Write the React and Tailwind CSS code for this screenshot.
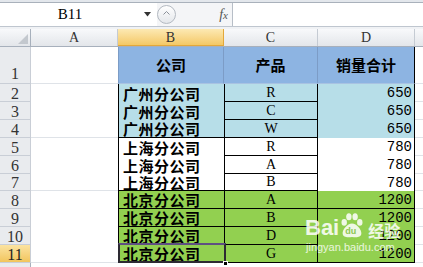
import React from 'react';

const rows = [
  { n: 2, co: '广州分公司', p: 'R', v: 650, kind: 'teal' },
  { n: 3, co: '广州分公司', p: 'C', v: 650, kind: 'teal' },
  { n: 4, co: '广州分公司', p: 'W', v: 650, kind: 'teal', bLine: true, aLine: true },
  { n: 5, co: '上海分公司', p: 'R', v: 780, kind: 'white' },
  { n: 6, co: '上海分公司', p: 'A', v: 780, kind: 'white' },
  { n: 7, co: '上海分公司', p: 'B', v: 780, kind: 'white', bLine: true, aLine: true, short: true },
  { n: 8, co: '北京分公司', p: 'A', v: 1200, kind: 'green', bLine: true, dLine: true },
  { n: 9, co: '北京分公司', p: 'B', v: 1200, kind: 'green', bLine: true },
  { n: 10, co: '北京分公司', p: 'D', v: 1200, kind: 'green', bLine: true },
  { n: 11, co: '北京分公司', p: 'G', v: 1200, kind: 'green', bLine: true, dLine: true, aLine: true, sel: true },
];

const fill = {
  teal: 'bg-[#b7dee8]',
  white: 'bg-white',
  green: 'bg-[#92d050]',
};

const cn = "font-['Noto_Sans_CJK_SC',sans-serif]";

function FormulaBar() {
  return (
    <div>
      <div className="h-[3px] bg-[#e3e7ec] border-b border-[#a9b1bb]" />
      <div className="flex h-[23px] bg-white">
        <div className="w-[157px] flex items-center">
          <div className="w-[140px] text-center font-['Liberation_Serif',serif] text-[15px] leading-none text-black">B11</div>
          <svg width="9" height="5" viewBox="0 0 9 5" className="ml-[3px]">
            <path d="M1 0 H8 L4.5 4.5 Z" fill="#333" />
          </svg>
        </div>
        <div className="w-[75px] flex items-center bg-[#f4f5f7]">
          <div className="w-[19px] h-[19px] rounded-full border border-[#b3b9c1] bg-gradient-to-b from-white to-[#e4e7eb] flex items-start justify-center">
            <svg width="7" height="4" viewBox="0 0 7 4" className="mt-[5px]">
              <path d="M0.5 3.5 L3.5 0.5 L6.5 3.5" fill="none" stroke="#8a9099" strokeWidth="1" />
            </svg>
          </div>
          <div className="ml-auto mr-[4px] font-['Liberation_Serif',serif] italic text-[14px] leading-none text-[#555]">
            f<span className="text-[11px]">x</span>
          </div>
        </div>
        <div className="flex-1 border-l border-[#b7bec7] bg-white" />
      </div>
      <div className="h-px bg-[#bfc6cf]" />
      <div className="h-[2px] bg-[#f0f2f5]" />
    </div>
  );
}

function ColHeaders() {
  const head = "h-full flex items-center justify-center border-r border-[#c5cbd3] font-['Liberation_Serif',serif] text-[14px] text-[#333]";
  return (
    <div className="flex h-[18px] bg-gradient-to-b from-[#f8f9fb] to-[#e3e6ea] border-b border-[#a7b0bc]">
      <div className="w-[31px] h-full border-r border-[#a7b0bc] relative">
        <svg width="10" height="10" viewBox="0 0 10 10" className="absolute right-[2px] bottom-[2px]">
          <path d="M10 0 V10 H0 Z" fill="#c3c8ce" />
        </svg>
      </div>
      <div className={`w-[87px] ${head}`}>A</div>
      <div className={`w-[106px] ${head} bg-gradient-to-b from-[#fce9b2] to-[#f4c864] text-[#222] border-b border-[#e3a83a]`}>B</div>
      <div className={`w-[94px] ${head}`}>C</div>
      <div className={`w-[97px] ${head}`}>D</div>
      <div className="flex-1 h-full" />
    </div>
  );
}

function TitleRow() {
  const blue = `h-full flex items-center justify-center bg-[#8db4e2] border-b border-[#a9c3e2] ${cn} font-bold text-[15px] text-black`;
  return (
    <div className="flex h-[37px]">
      <div className="w-[31px] h-full bg-[#e9ebee] border-r border-[#a7b0bc] border-b border-[#c9ced6] flex items-end justify-center pb-[1px] font-['Liberation_Serif',serif] text-[16px] leading-none text-[#333]">1</div>
      <div className="w-[87px] h-full border-b border-[#dfe3e8]" />
      <div className={`w-[106px] ${blue} border-l border-l-[#7c9cc6] border-r border-r-[#7c9cc6]`}>公司</div>
      <div className={`w-[94px] ${blue} border-r border-r-[#7c9cc6]`}>产品</div>
      <div className={`w-[97px] ${blue} border-r border-r-black`}>销量合计</div>
      <div className="flex-1 h-full border-b border-[#dfe3e8]" />
    </div>
  );
}

function DataRow({ r }) {
  const h = r.short ? 'h-[17px]' : 'h-[18px]';
  return (
    <div className={`flex ${h}`}>
      <div
        className={`w-[31px] h-full border-r border-[#a7b0bc] border-b border-[#c9ced6] flex items-center justify-center pt-[2px] font-['Liberation_Serif',serif] text-[16px] leading-none ${
          r.sel ? 'bg-gradient-to-b from-[#fbe3a0] to-[#f2c55c] text-[#222]' : 'bg-[#e9ebee] text-[#333]'
        }`}
      >
        {r.n}
      </div>
      <div className={`w-[87px] h-full ${r.aLine ? 'border-b border-[#dfe3e8]' : ''}`} />
      <div
        className={`relative w-[106px] h-full border-l border-black ${fill[r.kind]} ${
          r.bLine ? 'border-b border-b-black' : ''
        } flex items-center pl-[4px] overflow-visible`}
      >
        <span className={`${cn} font-bold text-[15px] leading-[15px] tracking-[0.5px] text-black whitespace-nowrap`}>{r.co}</span>
        {r.sel && (
          <>
            <div className="absolute -left-px -top-[2px] -right-[2px] -bottom-px border-2 border-[#2d2a33] border-t-[#5f4f82] pointer-events-none" />
            <div className="absolute -right-[4px] -bottom-[4px] w-[5px] h-[5px] bg-black border border-white" />
          </>
        )}
      </div>
      <div
        className={`w-[94px] h-full border-l border-r border-b border-black ${fill[r.kind]} flex items-center justify-center font-['Liberation_Serif',serif] text-[14px] leading-none text-black`}
      >
        {r.p}
      </div>
      <div
        className={`w-[97px] h-full border-r border-black ${r.dLine ? 'border-b border-b-black' : ''} ${fill[r.kind]} flex items-center justify-end pr-[2px] font-['Liberation_Mono',monospace] text-[14px] leading-none text-black`}
      >
        {r.v}
      </div>
      <div className="flex-1 h-full border-b border-[#dfe3e8]" />
    </div>
  );
}

function Watermark() {
  return (
    <div className="absolute left-[305px] top-[212px] pointer-events-none">
      <div className="flex items-end">
        <span className="font-['Liberation_Sans',sans-serif] font-bold text-[22px] leading-none text-white/85">Bai</span>
        <div className="relative w-[24px] h-[27px] ml-[1px]">
          <svg width="24" height="27" viewBox="0 0 23 26" className="absolute left-0 top-0">
            <ellipse cx="4" cy="10" rx="2.6" ry="3.2" fill="rgba(255,255,255,0.85)" />
            <ellipse cx="8.5" cy="4.5" rx="2.6" ry="3.4" fill="rgba(255,255,255,0.85)" />
            <ellipse cx="14.5" cy="4.5" rx="2.6" ry="3.4" fill="rgba(255,255,255,0.85)" />
            <ellipse cx="19" cy="10" rx="2.6" ry="3.2" fill="rgba(255,255,255,0.85)" />
            <path d="M11.5 11 C7 11 2 17 2.5 21 C3 25 8 24.5 11.5 24 C15 24.5 20 25 20.5 21 C21 17 16 11 11.5 11 Z" fill="rgba(255,255,255,0.85)" />
          </svg>
          <span className="absolute left-[5px] top-[15px] font-['Liberation_Sans',sans-serif] font-bold text-[9px] leading-none text-[#8cc653]">du</span>
        </div>
        <span className={`${cn} font-bold text-[16px] leading-none text-white/85 ml-[4px] mb-[1px]`}>经验</span>
      </div>
      <div className="font-['Liberation_Sans',sans-serif] text-[11px] leading-none text-white/80 mt-[3px] ml-[1px]">jingyan.baidu.com</div>
    </div>
  );
}

export default function App() {
  return (
    <div className="relative w-[423px] h-[267px] overflow-hidden bg-white">
      <FormulaBar />
      <ColHeaders />
      <TitleRow />
      {rows.map(r => (
        <DataRow key={r.n} r={r} />
      ))}
      <div className="flex h-[18px]">
        <div className="w-[31px] h-full bg-[#e9ebee] border-r border-[#a7b0bc]" />
        <div className="flex-1" />
      </div>
      <Watermark />
    </div>
  );
}
